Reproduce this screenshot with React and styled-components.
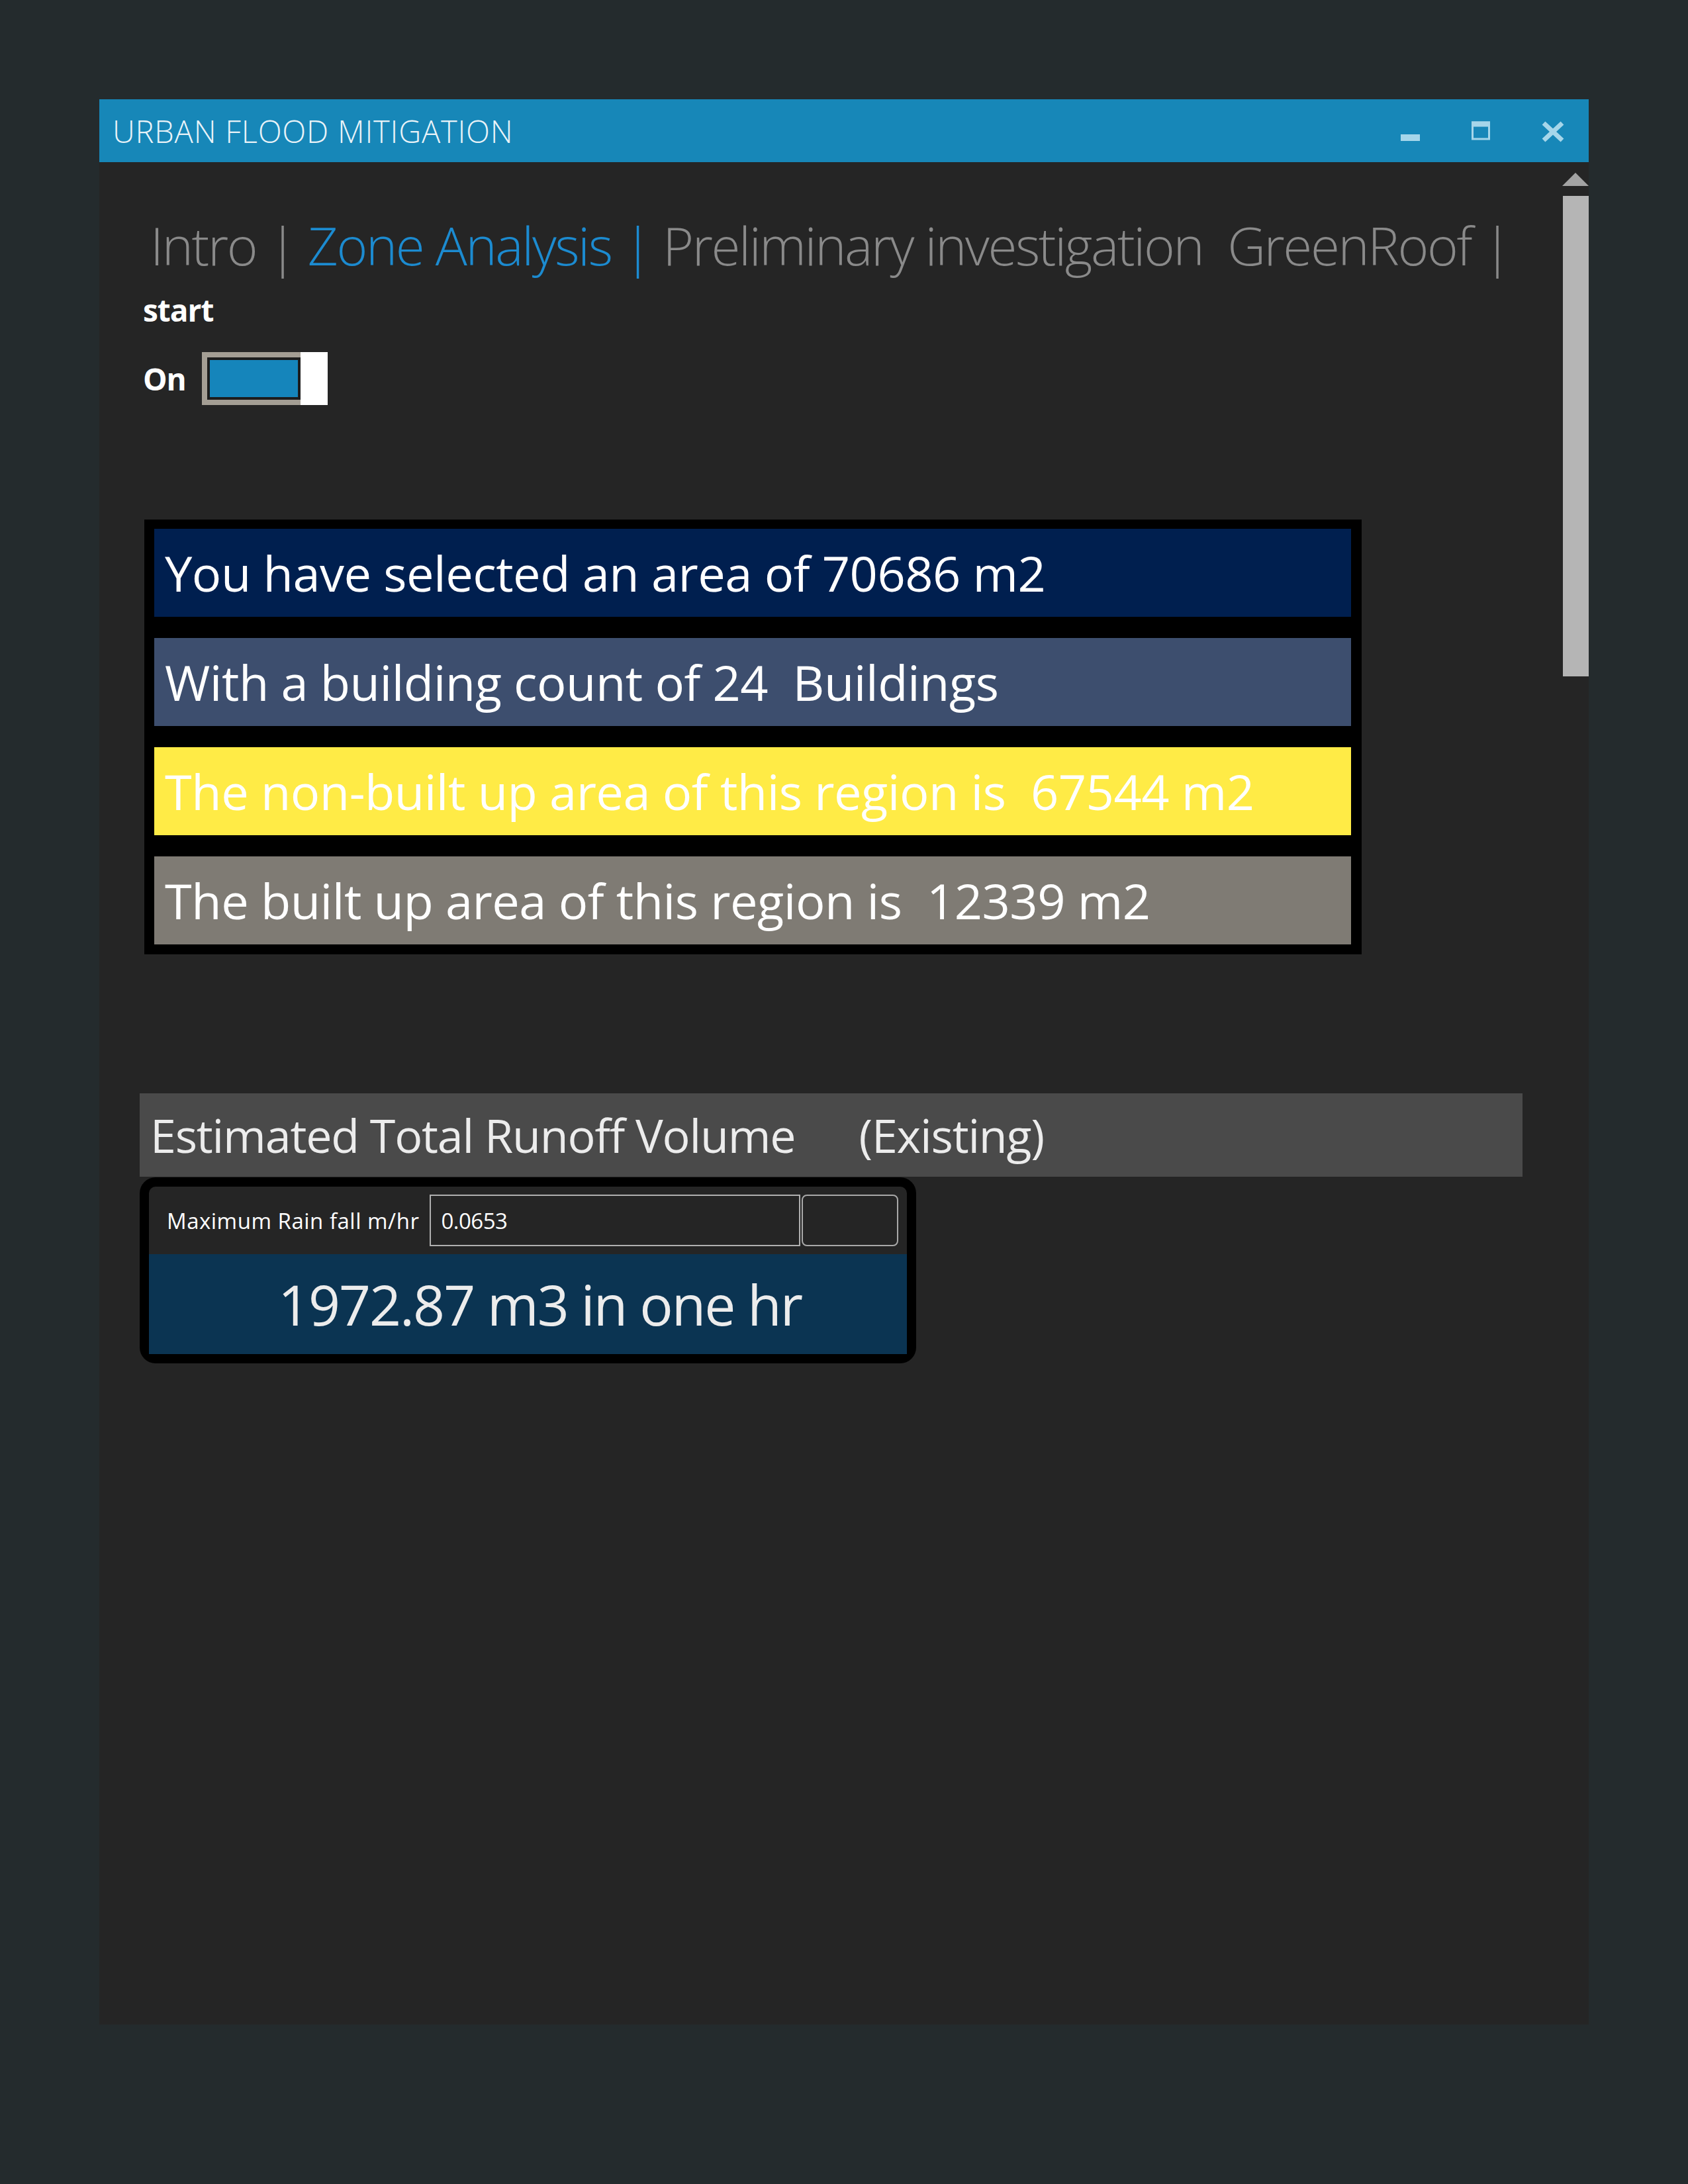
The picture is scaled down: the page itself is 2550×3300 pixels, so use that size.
import styled, { createGlobalStyle } from "styled-components";

const GlobalStyle = createGlobalStyle`
  html, body {
    margin: 0;
    padding: 0;
    background: #242b2d;
    font-family: "Open Sans", "Noto Sans", sans-serif;
  }
`;

const Page = styled.div`
  width: 2550px;
  height: 3300px;
  padding: 150px 0 0 150px;
  box-sizing: border-box;
`;

const Window = styled.div`
  width: 2250px;
  height: 2909px;
  background: #252525;
  display: flex;
  flex-direction: column;
`;

const TitleBar = styled.div`
  height: 95px;
  background: #1787b8;
  display: flex;
  align-items: center;
  flex-shrink: 0;
`;

const Title = styled.div`
  flex: 1;
  padding-left: 20px;
  font-size: 47px;
  font-weight: 300;
  color: #e9f3f8;
  letter-spacing: 0.8px;
`;

const WinButton = styled.div`
  width: 108px;
  height: 95px;
  display: flex;
  align-items: center;
  justify-content: center;
`;

const Body = styled.div`
  flex: 1;
  display: flex;
`;

const Content = styled.div`
  width: 2210px;
  padding-left: 61px;
  box-sizing: border-box;
  display: flex;
  flex-direction: column;
  align-items: flex-start;
`;

const Scrollbar = styled.div`
  width: 40px;
  padding-top: 16px;
  display: flex;
  flex-direction: column;
  align-items: center;
  gap: 15px;
`;

const Thumb = styled.div`
  width: 39px;
  height: 726px;
  background: #b5b5b5;
`;

const Tabs = styled.div`
  margin: 77px 0 0 16px;
  font-size: 80px;
  font-weight: 300;
  line-height: 96px;
  white-space: pre;
  letter-spacing: -2.4px;
`;

const Tab = styled.span`
  color: ${(p) => (p.$active ? "#1c8bd0" : "#8a8a8a")};
`;

const StartLabel = styled.div`
  margin: 22px 0 0 5px;
  font-size: 46px;
  font-weight: 700;
  line-height: 57px;
  color: #ffffff;
  letter-spacing: -1px;
`;

const ToggleRow = styled.div`
  margin: 35px 0 0 5px;
  display: flex;
  align-items: center;
  gap: 24px;
`;

const ToggleLabel = styled.span`
  font-size: 46px;
  font-weight: 700;
  color: #ffffff;
  letter-spacing: -1px;
`;

const Toggle = styled.div`
  width: 190px;
  height: 80px;
  display: flex;
`;

const Track = styled.div`
  flex: 1;
  border: 8px solid #a49e94;
  border-right: none;
  background: #1585bb;
  box-shadow: inset 0 0 0 4px #1d1d1d;
`;

const Knob = styled.div`
  width: 41px;
  background: #ffffff;
`;

const StatsPanel = styled.div`
  margin: 173px 0 0 7px;
  width: 1839px;
  background: #000;
  padding: 14px 16px 15px 15px;
  box-sizing: border-box;
  display: flex;
  flex-direction: column;
  gap: 32px;
`;

const Stat = styled.div`
  height: 133px;
  background: ${(p) => p.$bg};
  display: flex;
  align-items: center;
  padding-left: 16px;
  font-size: 74px;
  color: #ffffff;
  white-space: pre;
  letter-spacing: -0.5px;
`;

const SectionHeader = styled.div`
  margin-top: 210px;
  width: 2089px;
  height: 126px;
  background: #4a4a4a;
  display: flex;
  align-items: center;
  padding-left: 16px;
  box-sizing: border-box;
  font-size: 70px;
  color: #ececec;
  letter-spacing: -1.2px;
  white-space: pre;
`;

const HeaderNote = styled.span`
  margin-left: 96px;
`;

const RunoffCard = styled.div`
  margin-top: 1px;
  width: 1173px;
  height: 281px;
  background: #000;
  border-radius: 24px;
  padding: 14px;
  box-sizing: border-box;
  display: flex;
  flex-direction: column;
`;

const InputRow = styled.div`
  height: 102px;
  background: #252525;
  border-radius: 10px 10px 0 0;
  display: flex;
  align-items: center;
  padding: 0 12px 0 27px;
`;

const InputLabel = styled.span`
  font-size: 33px;
  color: #ffffff;
  letter-spacing: 0.5px;
  margin-right: 16px;
`;

const Field = styled.div`
  width: 560px;
  height: 78px;
  border: 2px solid #b0b0b0;
  box-sizing: border-box;
  padding-left: 15px;
  display: flex;
  align-items: center;
  font-size: 33px;
  color: #ffffff;
  letter-spacing: -0.5px;
`;

const FieldButton = styled.div`
  width: 146px;
  height: 78px;
  margin-left: 2px;
  border: 2px solid #a8a8a8;
  border-radius: 8px;
  box-sizing: border-box;
`;

const Result = styled.div`
  flex: 1;
  background: #0b3452;
  display: flex;
  align-items: center;
  justify-content: center;
  padding-left: 36px;
  font-size: 84px;
  color: #ececec;
  letter-spacing: -2px;
`;

const stats = [
  { bg: "#001f4f", text: "You have selected an area of 70686 m2" },
  { bg: "#3d4e6e", text: "With a building count of 24  Buildings" },
  { bg: "#ffeb46", text: "The non-built up area of this region is  67544 m2" },
  { bg: "#7f7b74", text: "The built up area of this region is  12339 m2" },
];

export default function App() {
  return (
    <>
      <GlobalStyle />
      <Page>
        <Window>
          <TitleBar>
            <Title>URBAN FLOOD MITIGATION</Title>
            <WinButton>
              <svg width="40" height="40" viewBox="0 0 40 40">
                <rect x="6" y="25" width="29" height="10" fill="#a6d6ea" />
              </svg>
            </WinButton>
            <WinButton>
              <svg width="40" height="40" viewBox="0 0 40 40">
                <rect x="6.5" y="7" width="25" height="25" fill="none" stroke="#a6d6ea" strokeWidth="3" />
                <rect x="5" y="5.5" width="28" height="8" fill="#a6d6ea" />
              </svg>
            </WinButton>
            <WinButton>
              <svg width="40" height="40" viewBox="0 0 40 40">
                <path d="M6 8 L34 34 M34 8 L6 34" stroke="#a6d6ea" strokeWidth="7" />
              </svg>
            </WinButton>
          </TitleBar>
          <Body>
            <Content>
              <Tabs>
                <Tab>Intro | </Tab>
                <Tab $active>Zone Analysis | </Tab>
                <Tab>Preliminary investigation  </Tab>
                <Tab>GreenRoof |</Tab>
              </Tabs>
              <StartLabel>start</StartLabel>
              <ToggleRow>
                <ToggleLabel>On</ToggleLabel>
                <Toggle>
                  <Track />
                  <Knob />
                </Toggle>
              </ToggleRow>
              <StatsPanel>
                {stats.map((s) => (
                  <Stat key={s.text} $bg={s.bg}>
                    {s.text}
                  </Stat>
                ))}
              </StatsPanel>
              <SectionHeader>
                Estimated Total Runoff Volume
                <HeaderNote>(Existing)</HeaderNote>
              </SectionHeader>
              <RunoffCard>
                <InputRow>
                  <InputLabel>Maximum Rain fall m/hr</InputLabel>
                  <Field>0.0653</Field>
                  <FieldButton />
                </InputRow>
                <Result>1972.87 m3 in one hr</Result>
              </RunoffCard>
            </Content>
            <Scrollbar>
              <svg width="40" height="20" viewBox="0 0 40 20">
                <polygon points="20,0 40,20 0,20" fill="#a3a3a3" />
              </svg>
              <Thumb />
            </Scrollbar>
          </Body>
        </Window>
      </Page>
    </>
  );
}
